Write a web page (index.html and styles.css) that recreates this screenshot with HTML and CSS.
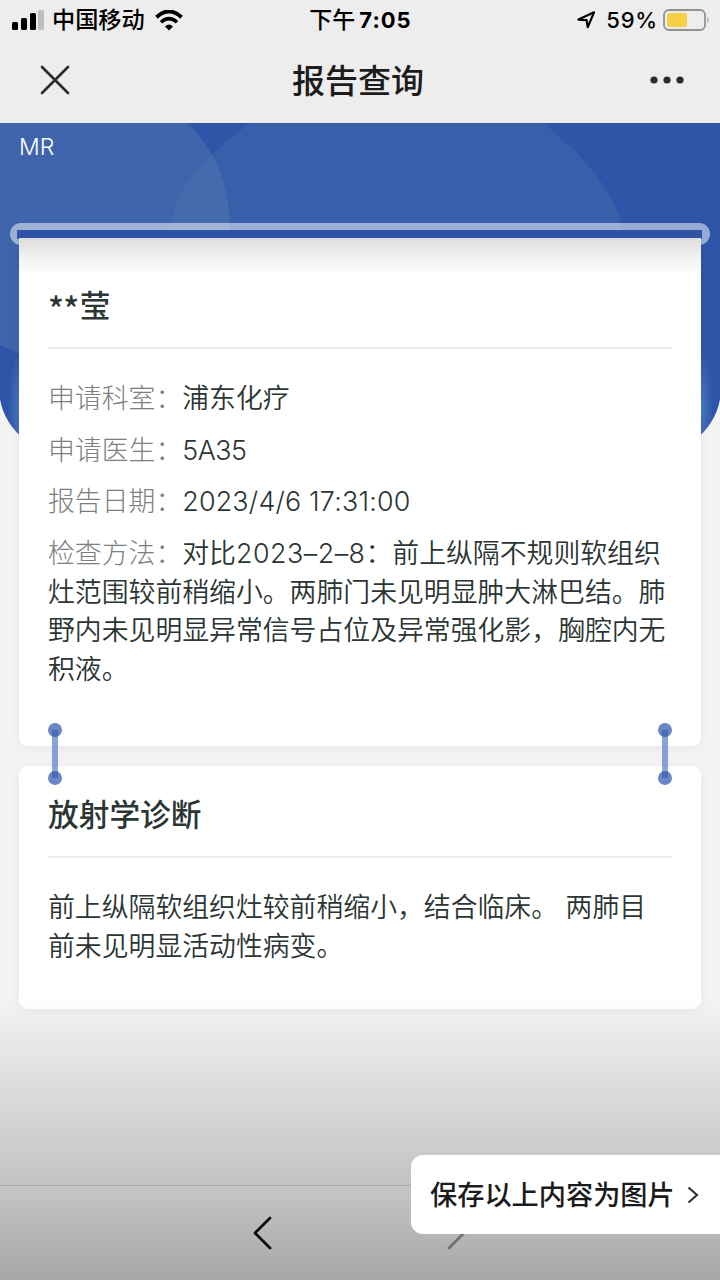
FILE: index.html
```
<!DOCTYPE html>
<html lang="zh-CN">
<head>
    <meta charset="UTF-8">
    <title>报告查询</title>
    <meta name="viewport" content="width=device-width, initial-scale=1.0">
    <link rel="stylesheet" href="styles.css">
</head>
<body>
    <div class="status-bar">
        <div class="status-left">
            <svg class="signal" width="32" height="20" viewBox="0 0 32 20">
                <rect x="0" y="12" width="6" height="8" rx="1.5"/>
                <rect x="9" y="8" width="6" height="12" rx="1.5"/>
                <rect x="18" y="3" width="6" height="17" rx="1.5"/>
                <rect x="26" y="0" width="6" height="20" rx="1.5" fill="#bdbdbd"/>
            </svg>
            <span class="carrier">中国移动</span>
            <svg class="wifi" width="28" height="21" viewBox="0 0 28 21">
                <path d="M1.5 7.2Q14-4.2 26.500 7.200" fill="none" stroke="#000" stroke-width="4"/>
                <path d="M6 12.300Q14 5 22 12.300" fill="none" stroke="#000" stroke-width="3.500"/>
                <path d="M10 16.500Q14 12.500 18 16.500L14 20.500Z"/>
            </svg>
        </div>
        <div class="clock"><span class="clock-cn">下午</span>7:05</div>
        <div class="status-right">
            <svg class="location" width="19" height="18" viewBox="0 0 19 18">
                <path d="M1.500 8.600L17 1.300L10.800 16.200L9.600 9.200Z" fill="none" stroke="#000" stroke-width="2.200" stroke-linejoin="round"/>
            </svg>
            <span class="percent">59%</span>
            <svg class="battery" width="47" height="22" viewBox="0 0 47 22">
                <rect x="1" y="1" width="41" height="20" rx="5" fill="none" stroke="#929292" stroke-width="1.800"/>
                <rect x="4" y="4" width="20" height="14" rx="2" fill="#f8ce46"/>
                <path d="M44.500 7.500Q46.500 11 44.500 14.500Z" fill="#8e8e8e"/>
            </svg>
        </div>
    </div>

    <div class="nav-bar">
        <svg class="close" width="30" height="30" viewBox="0 0 30 30">
            <path d="M2 2L28 28M28 2L2 28" stroke="#2b2b2b" stroke-width="2.600" stroke-linecap="round"/>
        </svg>
        <h1>报告查询</h1>
        <svg class="more" width="34" height="8" viewBox="0 0 34 8" fill="#2b2b2b">
            <circle cx="4" cy="4" r="3.600"/>
            <circle cx="17" cy="4" r="3.600"/>
            <circle cx="30" cy="4" r="3.600"/>
        </svg>
    </div>

    <main class="page">
        <!-- blue banner behind the report -->
        <svg class="banner" width="720" height="318" viewBox="0 0 720 318">
            <defs>
                <clipPath id="bannerShape">
                    <path d="M0 0H720V276Q716 300 694 318H26Q4 300 0 276Z"/>
                </clipPath>
                <radialGradient id="glow">
                    <stop offset="0" stop-color="#4f82c8" stop-opacity=".8"/>
                    <stop offset="1" stop-color="#4f82c8" stop-opacity="0"/>
                </radialGradient>
            </defs>
            <g clip-path="url(#bannerShape)">
                <rect width="720" height="318" fill="#2e55a7"/>
                <path d="M249 0C224 22 172 55 170 112H624C616 68 588 38 544 0Z" fill="#3860aa"/>
                <path d="M0 0H187C215 25 230 65 230 103A146 146 0 0 1 84 249C53 249 22 232 0 222Z" fill="#5e80b6" fill-opacity=".35"/>
                <ellipse cx="20" cy="285" rx="12" ry="60" fill="url(#glow)"/>
                <ellipse cx="701" cy="285" rx="12" ry="60" fill="url(#glow)"/>
            </g>
        </svg>

        <div class="exam-type">MR</div>
        <div class="slot"><div class="slot-gap"></div></div>

        <section class="card report">
            <h2><span class="mask">**</span>莹</h2>
            <div class="rows">
                <p><span class="label">申请科室：</span>浦东化疗</p>
                <p><span class="label">申请医生：</span><span class="code">5A35</span></p>
                <p><span class="label">报告日期：</span><span class="date">2023/4/6 17:31:00</span></p>
                <p><span class="label">检查方法：</span>对比<span class="compare">2023–2–8</span>：前上纵隔不规则软组织灶范围较前稍缩小。两肺门未见明显肿大淋巴结。肺野内未见明显异常信号占位及异常强化影，胸腔内无积液。</p>
            </div>
        </section>

        <section class="card diagnosis">
            <div class="link link-left"></div>
            <div class="link link-right"></div>
            <h2>放射学诊断</h2>
            <div class="rows">
                <p>前上纵隔软组织灶较前稍缩小，结合临床。 两肺目前未见明显活动性病变。</p>
            </div>
        </section>
    </main>

    <div class="toolbar">
        <svg width="20" height="34" viewBox="0 0 20 34">
            <path d="M18 2L3 17L18 32" fill="none" stroke="#111" stroke-width="2.800" stroke-linecap="round" stroke-linejoin="round"/>
        </svg>
        <svg width="20" height="34" viewBox="0 0 20 34">
            <path d="M3 2L18 17L3 32" fill="none" stroke="#999" stroke-width="2.800" stroke-linecap="round" stroke-linejoin="round"/>
        </svg>
    </div>

    <div class="shade"></div>

    <div class="save">
        <span>保存以上内容为图片</span>
        <svg width="12" height="18" viewBox="0 0 12 18">
            <path d="M1.500 1.500L10 9L1.500 16.500" fill="none" stroke="#333" stroke-width="2.200"/>
        </svg>
    </div>
</body>
</html>
```

FILE: styles.css
```
:root {
    --bar: #ededed;
    --bg: #f3f3f6;
    --blue: #2e55a7;
    --text: #2b3534;
    --muted: #7e7e7e;
    --line: #ececec;
    --font-main: Inter, "Noto Sans CJK SC", sans-serif;
}
* {
    box-sizing: border-box;
    margin: 0;
    padding: 0;
}
body {
    position: relative;
    display: flex;
    flex-direction: column;
    width: 720px;
    height: 1280px;
    overflow: hidden;
    background: var(--bg);
    color: var(--text);
    font-family: var(--font-main);
}
svg {
    display: block;
    flex: none;
}
.status-bar {
    display: grid;
    grid-template-columns: 1fr auto 1fr;
    align-items: center;
    height: 40px;
    padding: 0 11px 0 12px;
    background: var(--bar);
    color: #000;
    font-size: 22px;
    font-weight: 600;
    white-space: nowrap;
}
.status-left, .status-right {
    display: flex;
    align-items: center;
}
.status-right {
    justify-content: flex-end;
}
.signal {
    margin-bottom: 1px;
}
.carrier {
    margin: 0 10px 0 8px;
    font-size: 23.2px;
    font-weight: 500;
    line-height: 40px;
}
.clock {
    font-weight: 700;
    line-height: 40px;
    letter-spacing: 1px;
}
.clock-cn {
    margin-right: 4px;
    font-size: 23px;
    font-weight: 500;
    letter-spacing: 0;
}
.percent {
    margin: 0 5px 0 10px;
    font-weight: 500;
    letter-spacing: .8px;
}
.battery {
    margin-right: -1px;
}
.nav-bar {
    display: flex;
    justify-content: space-between;
    align-items: center;
    height: 83px;
    padding: 0 36px 4px 40px;
    background: var(--bar);
}
.nav-bar h1 {
    margin-left: -4px;
    padding-top: 3px;
    color: #1c1c1c;
    font-size: 33px;
    font-weight: 500;
    line-height: 48px;
}
.page {
    position: relative;
    flex: 1;
}
.banner {
    position: absolute;
    top: 0;
    left: 0;
}
.exam-type {
    position: relative;
    height: 100px;
    padding: 11px 19px;
    color: #fff;
    font-size: 23px;
    font-weight: 300;
    line-height: 27px;
}
.slot {
    position: relative;
    height: 22px;
    margin: 0 10px;
    padding: 7px 8px 0 7px;
    border-radius: 11px;
    background: rgba(255, 255, 255, .5);
}
.slot-gap {
    height: 9px;
    background: var(--blue);
}
.card {
    position: relative;
    margin: 0 19px;
    padding: 0 29px;
    border-radius: 9px;
    background: #fff;
    box-shadow: 0 2px 12px rgba(0, 0, 0, .05);
}
.card h2 {
    border-bottom: 2px solid var(--line);
    font-size: 30.7px;
    font-weight: 500;
}
.report {
    height: 508px;
    margin-top: -7px;
    border-radius: 0 0 9px 9px;
    background: linear-gradient(#dcdcdc, #f0f0f0 18px, #fff 38px);
}
.report h2 {
    height: 111px;
    padding-top: 46px;
    line-height: 44px;
}
.mask {
    font-family: "Noto Sans CJK SC", sans-serif;
    font-size: 33px;
    line-height: 1;
    vertical-align: -5px;
    margin-right: 1px;
    letter-spacing: -.6px;
}
.diagnosis {
    height: 243px;
    margin-top: 20px;
}
.diagnosis h2 {
    height: 92px;
    padding-top: 27px;
    line-height: 44px;
}
.rows {
    padding-top: 30px;
    font-size: 26.85px;
    font-weight: 350;
    line-height: 38.5px;
}
.rows p {
    margin-bottom: 13.2px;
}
.label {
    color: var(--muted);
    font-weight: 300;
}
.code {
    letter-spacing: -.5px;
}
.date {
    letter-spacing: .2px;
}
.compare {
    letter-spacing: .5px;
}
/* posts joining the two cards */
.link {
    position: absolute;
    top: -36px;
    width: 6px;
    height: 48px;
    background: rgba(61, 103, 190, .6);
}
.link::before, .link::after {
    content: "";
    position: absolute;
    left: -4px;
    width: 14px;
    height: 14px;
    border-radius: 50%;
    background: rgba(48, 88, 172, .72);
}
.link::before {
    top: -7px;
}
.link::after {
    bottom: -7px;
}
.link-left {
    left: 33px;
}
.link-right {
    right: 33px;
}
.toolbar {
    display: flex;
    gap: 174px;
    height: 95px;
    padding: 30px 0 0 252px;
    border-top: 1px solid #d2d2d2;
    background: #f7f7f7;
}
.shade {
    position: absolute;
    right: 0;
    bottom: 0;
    left: 0;
    height: 280px;
    background: linear-gradient(rgba(0, 0, 0, 0), rgba(0, 0, 0, .08) 26%, rgba(0, 0, 0, .2) 66%, rgba(0, 0, 0, .32));
}
.save {
    position: absolute;
    right: 0;
    bottom: 46px;
    display: flex;
    align-items: center;
    gap: 12px;
    width: 309px;
    height: 79px;
    padding-left: 19px;
    border-radius: 12px 0 0 12px;
    background: #fff;
    color: #1b1b1b;
    font-size: 27.2px;
    font-weight: 500;
    white-space: nowrap;
}
.save span {
    padding-bottom: 3px;
}
```
